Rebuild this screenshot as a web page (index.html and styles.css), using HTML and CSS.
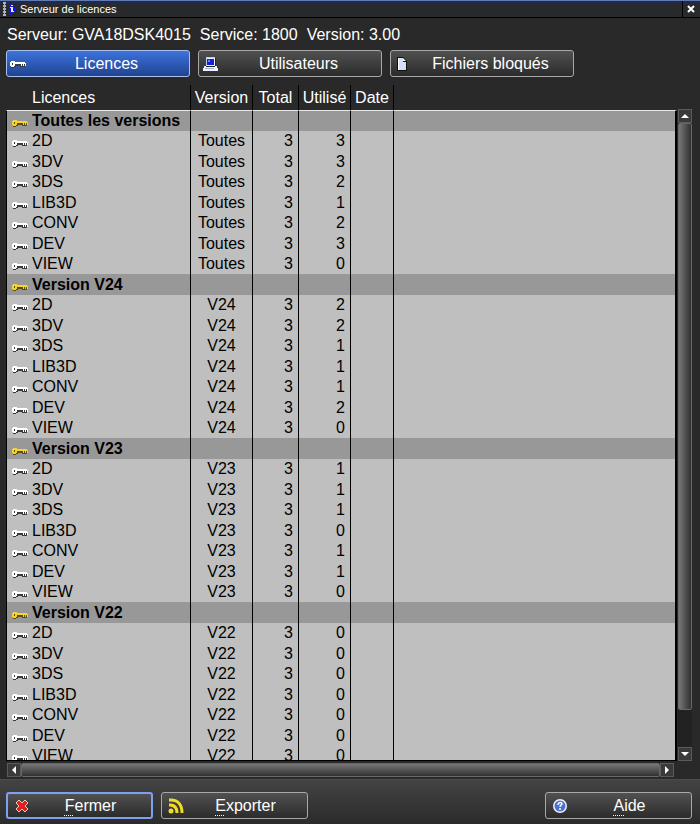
FILE: index.html
```html
<!DOCTYPE html>
<html lang="fr">
<head>
<meta charset="utf-8">
<title>Serveur de licences</title>
<link rel="stylesheet" href="styles.css">
</head>
<body>
<svg class="defs" aria-hidden="true">
  <symbol id="key" viewBox="0 0 16 10">
    <path class="key-edge" d="M2 3h3v1h10v4h-5V7H6v1H4v1H1V4h1z"/>
    <path class="key-fill" fill-rule="evenodd" d="M1 2h4v1h10v1h1v3h-1V5h-1v2h-1V5h-1v2h-1V5H5v2H4v1H1V7H0V3h1zM2 4v2h1V4z"/>
    <path class="key-edge" d="M2 4h1v2H2zM5 5h5v1H5zM12 5h1v1h-1z"/>
  </symbol>
</svg>

<header class="titlebar">
  <svg class="app-icon" viewBox="0 0 16 16" aria-hidden="true">
    <path d="M1 1h3v2H3v1h1v2H3v1h1v2H3v1h1v2H3v1h1v2H1v-2h1v-1H1v-2h1V9H1V7h1V6H1V4h1V3H1z" fill="#a9b4c4"/>
    <path d="M7 1l8 7-8 7z" fill="#1616e0"/>
    <path d="M9 4h2v1H9zM8 6h3v4h1v1H9V7H8z" fill="#e8ecff"/>
  </svg>
  <h1 class="title">Serveur de licences</h1>
  <button class="close" aria-label="Fermer la fenêtre">
    <svg viewBox="0 0 8 8" aria-hidden="true"><path d="M1 1l6 6M7 1l-6 6" stroke="#fff" stroke-width="2"/></svg>
  </button>
</header>

<main class="content">
  <p class="server"><span>Serveur: GVA18DSK4015</span><span>Service: 1800</span><span>Version: 3.00</span></p>

  <nav class="tabs">
    <button class="button tab active">
      <svg class="icon key" aria-hidden="true"><use href="#key"/></svg><span class="label">Licences</span>
    </button>
    <button class="button tab">
      <svg class="icon" viewBox="0 0 16 16" aria-hidden="true">
        <path d="M4 1h9v9h2v2h1v3H1v-3h1v-2h2z" fill="#eef2ff"/>
        <path d="M4 1h9v1H5v8H4z" fill="#b9c8f4"/>
        <path d="M5 3h7v6H5z" fill="#1022d8"/>
        <path d="M6 4h2v2H6z" fill="#6c82ff"/>
        <path d="M13 2h1v8h-1zM4 10h9v1H4z" fill="#20242e"/>
        <path d="M3 12h9v1H3z" fill="#a7b4d8"/>
      </svg><span class="label">Utilisateurs</span>
    </button>
    <button class="button tab">
      <svg class="icon" viewBox="0 0 16 16" aria-hidden="true">
        <path d="M3 1h6l4 4v10H3z" fill="#111"/>
        <path d="M4 2h5v4h3v8H4z" fill="#d5e0f7"/>
        <path d="M4 2h1v12H4zM9 2l3 3H9z" fill="#fff"/>
      </svg><span class="label">Fichiers bloqués</span>
    </button>
  </nav>

  <section class="grid">
    <div class="viewport">
      <table>
        <colgroup><col class="c-name"><col class="c-version"><col class="c-total"><col class="c-used"><col class="c-date"><col></colgroup>
        <thead><tr><th scope="col">Licences</th><th scope="col">Version</th><th scope="col">Total</th><th scope="col">Utilisé</th><th scope="col">Date</th><td></td></tr></thead>
        <tbody id="rows"></tbody>
      </table>
    </div>
    <div class="scroll vertical">
      <button class="arrow" aria-label="Haut"><svg viewBox="0 0 12 12"><path d="M6 4l4 4H2z"/></svg></button>
      <div class="thumb"></div>
      <div class="rest"></div>
      <button class="arrow" aria-label="Bas"><svg viewBox="0 0 12 12"><path d="M2 4h8L6 8z"/></svg></button>
    </div>
    <div class="scroll horizontal">
      <button class="arrow" aria-label="Gauche"><svg viewBox="0 0 12 12"><path d="M8 2v8L4 6z"/></svg></button>
      <div class="thumb"></div>
      <button class="arrow" aria-label="Droite"><svg viewBox="0 0 12 12"><path d="M4 2l4 4-4 4z"/></svg></button>
    </div>
  </section>
</main>

<footer class="actions">
  <button class="button action default">
    <svg class="icon" viewBox="0 0 16 16" aria-hidden="true">
      <path d="M5 2l3 3 3-3 3 3-3 3 3 3-3 3-3-3-3 3-3-3 3-3-3-3z" fill="#e02020" stroke="#f3c9b8" stroke-width="1"/>
    </svg><span class="label"><span class="mnemonic">F</span>ermer</span>
  </button>
  <button class="button action">
    <svg class="icon" viewBox="0 0 16 16" aria-hidden="true">
      <g fill="none" stroke="#f0dc28" stroke-width="3"><path d="M1 2h2c7 0 11 5 11 13"/><path d="M1 7h1c5 0 7 3 7 8"/></g>
      <circle cx="3" cy="13" r="2.5" fill="#f0dc28"/>
    </svg><span class="label"><span class="mnemonic">E</span>xporter</span>
  </button>
  <button class="button action help">
    <svg class="icon" viewBox="0 0 16 16" aria-hidden="true">
      <circle cx="8" cy="8" r="7" fill="#f1f4fb"/>
      <circle cx="8" cy="8" r="5.5" fill="#4a70d2"/>
      <path d="M6 7c0-3 4-3 4-1 0 1-2 1-2 3M8 10v2" fill="none" stroke="#fff" stroke-width="1.5"/>
    </svg><span class="label"><span class="mnemonic">A</span>ide</span>
  </button>
</footer>
<script src="rows.js"></script>
</body>
</html>
```
FILE: rows.js
```js
const names = ["2D", "3DV", "3DS", "LIB3D", "CONV", "DEV", "VIEW"];
const groups = [
  { title: "Toutes les versions", version: "Toutes", used: [3, 3, 2, 1, 2, 3, 0] },
  { title: "Version V24", version: "V24", used: [2, 2, 1, 1, 1, 2, 0] },
  { title: "Version V23", version: "V23", used: [1, 1, 1, 0, 1, 1, 0] },
  { title: "Version V22", version: "V22", used: [0, 0, 0, 0, 0, 0, 0] }
];
const icon = '<svg class="row-key key" aria-hidden="true"><use href="#key"/></svg>';
const row = (cls, cells) =>
  `<tr class="${cls}">${cells.map((c) => `<td>${c}</td>`).join("")}<td></td><td></td></tr>`;

document.getElementById("rows").innerHTML = groups
  .map((g) =>
    row("group", [icon + g.title, "", "", ""]) +
    names.map((n, i) => row("item", [icon + n, g.version, 3, g.used[i]])).join(""))
  .join("");
```
FILE: styles.css
```css
* { box-sizing: border-box; }

body {
  margin: 0;
  height: 100vh;
  display: flex;
  flex-direction: column;
  overflow: hidden;
  background: #292929;
  color: #fff;
  font: 16px/20px "Liberation Sans", Arial, sans-serif;
}

button { font: inherit; color: inherit; padding: 0; }
svg { display: block; flex: none; }
.defs { display: none; }

.titlebar {
  flex: none;
  display: flex;
  align-items: center;
  height: 18px;
  padding: 0 1px 0 2px;
  border-top: 1px solid #6479ad;
  border-bottom: 1px solid #000;
  background: linear-gradient(#1c2c50 0, #1c2c50 2px, #282a2e 3px, #292929);
}
.app-icon { width: 16px; height: 16px; }
.title { flex: 1; margin: 0 0 0 2px; font-size: 11px; line-height: 14px; font-weight: 400; }
.close {
  width: 17px;
  height: 16px;
  display: grid;
  place-items: center;
  border: 0;
  border-left: 1px solid #000;
  background: none;
}
.close svg { width: 8px; height: 8px; }

.content { flex: 1; min-height: 0; display: flex; flex-direction: column; padding: 7px 8px 2px 6px; }
.server { display: flex; gap: 9px; margin: 0; padding-left: 1px; height: 25px; line-height: 20px; }

.tabs { display: flex; gap: 8px; margin-bottom: 8px; }
.button {
  display: flex;
  align-items: center;
  height: 27px;
  padding: 0 2px;
  border: 1px solid #a8a8a8;
  border-radius: 3px;
  background: linear-gradient(#515151, #2b2b2b);
}
.button .icon { width: 16px; height: 16px; margin-left: 1px; }
.button .label { flex: 1; text-align: center; }
.tab { width: 184px; }
.tab.active { border-color: #a9bfec; background: linear-gradient(#3d73dc, #1f4390); }
.tab .key { height: 10px; }

.key { --fill: #fff; --edge: #3a3a3a; }
.key-fill { fill: var(--fill); }
.key-edge { fill: var(--edge); }
.row-key { display: inline-block; width: 16px; height: 10px; margin-right: 4px; vertical-align: -2px; }
.group .key { --fill: #f5d52c; --edge: #5c4a10; }

.grid { flex: 1; min-height: 0; display: grid; grid-template: 1fr 14px / 1fr 14px; gap: 2px 1px; }
.viewport { min-width: 0; min-height: 0; overflow: hidden; border-bottom: 1px solid #000; }

table { width: 100%; table-layout: fixed; border-collapse: separate; border-spacing: 0; }
.c-name { width: 185px; }
.c-version { width: 62px; }
.c-total { width: 46px; }
.c-used { width: 52px; }
.c-date { width: 43px; }
th, td { padding: 0; white-space: nowrap; border-right: 1px solid #000; }
th { height: 25px; font-weight: 400; text-align: center; }
th:first-child { text-align: left; padding-left: 26px; }
thead td { border: 0; }

#rows { color: #000; }
#rows tr { height: 20px; line-height: 20px; background: #bfbfbf; }
#rows tr:nth-child(odd) { height: 21px; }
#rows tr.group { background: #989898; font-weight: 700; }
#rows tr:first-child td { border-top: 1px solid #e8e8e8; }
#rows td:first-child { border-left: 1px solid #000; padding-left: 5px; }
#rows td:nth-child(2) { text-align: center; }
#rows td:nth-child(3), #rows td:nth-child(4) { text-align: right; padding-right: 5px; }
#rows td:last-child { border-right-width: 2px; }

.scroll { display: flex; background: #222; }
.vertical { flex-direction: column; margin-top: 24px; }
.horizontal { margin: 0 3px 0 1px; }
.arrow { flex: none; width: 14px; height: 14px; border: 1px solid #5b5b5b; background: #3a3a3a; }
.arrow svg { width: 12px; height: 12px; fill: #fff; }
.thumb { border: 1px solid #686868; border-radius: 2px; }
.vertical .thumb { flex: 589; background: linear-gradient(90deg, #777, #303030); }
.vertical .rest { flex: 37; }
.horizontal .thumb { flex: 1; background: linear-gradient(#777, #303030); }

.actions {
  flex: none;
  display: flex;
  gap: 8px;
  padding: 12px 8px 5px 6px;
  border-top: 1px solid #4c4c4c;
  background: linear-gradient(#434343, #2b2b2b);
}
.action { width: 147px; }
.action .icon { margin-left: 4px; }
.action .label { padding-left: 2px; }
.default { border: 2px solid #7f9ff0; }
.help { margin-left: auto; }
.mnemonic { text-decoration: underline dotted 1px; text-underline-offset: 4px; }
```
